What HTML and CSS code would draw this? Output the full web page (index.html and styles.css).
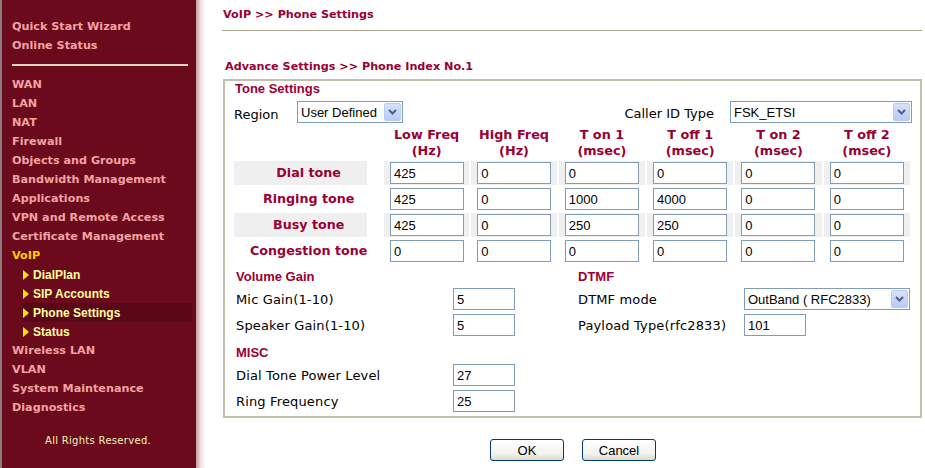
FILE: index.html
```html
<!DOCTYPE html>
<html>
<head>
<meta charset="utf-8">
<link rel="stylesheet" href="styles.css">
</head>
<body>
<div class="page">
  <nav class="sidebar">
    <div class="menu">
      <a class="nav">Quick Start Wizard</a>
      <a class="nav">Online Status</a>
      <div class="side-rule"></div>
      <a class="nav">WAN</a>
      <a class="nav">LAN</a>
      <a class="nav">NAT</a>
      <a class="nav">Firewall</a>
      <a class="nav">Objects and Groups</a>
      <a class="nav">Bandwidth Management</a>
      <a class="nav">Applications</a>
      <a class="nav">VPN and Remote Access</a>
      <a class="nav">Certificate Management</a>
      <a class="nav nav-open">VoIP</a>
      <a class="sub"><svg class="tri" width="6" height="10" viewBox="0 0 6 10"><path d="M0 0L6 5L0 10Z" fill="#f5e400"/></svg><span>DialPlan</span></a>
      <a class="sub"><svg class="tri" width="6" height="10" viewBox="0 0 6 10"><path d="M0 0L6 5L0 10Z" fill="#f5e400"/></svg><span>SIP Accounts</span></a>
      <a class="sub sub-active"><svg class="tri" width="6" height="10" viewBox="0 0 6 10"><path d="M0 0L6 5L0 10Z" fill="#f5e400"/></svg><span>Phone Settings</span></a>
      <a class="sub"><svg class="tri" width="6" height="10" viewBox="0 0 6 10"><path d="M0 0L6 5L0 10Z" fill="#f5e400"/></svg><span>Status</span></a>
      <a class="nav">Wireless LAN</a>
      <a class="nav">VLAN</a>
      <a class="nav">System Maintenance</a>
      <a class="nav">Diagnostics</a>
    </div>
    <div class="copy">All Rights Reserved.</div>
  </nav>
  <div class="fade"></div>
  <main class="main">
    <h1 class="title">VoIP &gt;&gt; Phone Settings</h1>
    <h2 class="subtitle">Advance Settings &gt;&gt; Phone Index No.1</h2>
    <div class="box">
      <div class="heading">Tone Settings</div>
      <div class="region-row">
        <span class="region-label">Region</span>
        <span class="sel sel-region"><select><option>User Defined</option></select><span class="sel-btn"><svg width="9" height="6" viewBox="0 0 9 6"><path d="M1 1L4.5 4.5L8 1" fill="none" stroke="#4d6185" stroke-width="2"/></svg></span></span>
        <span class="caller-label">Caller ID Type</span>
        <span class="sel sel-caller"><select><option>FSK_ETSI</option></select><span class="sel-btn"><svg width="9" height="6" viewBox="0 0 9 6"><path d="M1 1L4.5 4.5L8 1" fill="none" stroke="#4d6185" stroke-width="2"/></svg></span></span>
      </div>
      <table class="tones">
        <colgroup>
          <col class="c-label"><col class="c-gap"><col class="c86"><col class="c86"><col class="c87"><col class="c87"><col class="c87"><col class="c87">
        </colgroup>
        <tr class="head">
          <th></th><th></th>
          <th>Low Freq<br>(Hz)</th>
          <th>High Freq<br>(Hz)</th>
          <th>T on 1<br>(msec)</th>
          <th>T off 1<br>(msec)</th>
          <th>T on 2<br>(msec)</th>
          <th>T off 2<br>(msec)</th>
        </tr>
        <tr class="shade">
          <td class="lbl">Dial tone</td><td class="gap"></td>
          <td><input value="425"></td><td><input value="0"></td><td><input value="0"></td><td><input value="0"></td><td><input value="0"></td><td><input value="0"></td>
        </tr>
        <tr>
          <td class="lbl">Ringing tone</td><td class="gap"></td>
          <td><input value="425"></td><td><input value="0"></td><td><input value="1000"></td><td><input value="4000"></td><td><input value="0"></td><td><input value="0"></td>
        </tr>
        <tr class="shade">
          <td class="lbl">Busy tone</td><td class="gap"></td>
          <td><input value="425"></td><td><input value="0"></td><td><input value="250"></td><td><input value="250"></td><td><input value="0"></td><td><input value="0"></td>
        </tr>
        <tr>
          <td class="lbl">Congestion tone</td><td class="gap"></td>
          <td><input value="0"></td><td><input value="0"></td><td><input value="0"></td><td><input value="0"></td><td><input value="0"></td><td><input value="0"></td>
        </tr>
      </table>
      <div class="lower">
        <div class="col col-left">
          <div class="heading">Volume Gain</div>
          <div class="frow"><span class="flabel">Mic Gain(1-10)</span><input class="short" value="5"></div>
          <div class="frow"><span class="flabel">Speaker Gain(1-10)</span><input class="short" value="5"></div>
          <div class="heading heading-misc">MISC</div>
          <div class="frow"><span class="flabel">Dial Tone Power Level</span><input class="short" value="27"></div>
          <div class="frow"><span class="flabel">Ring Frequency</span><input class="short" value="25"></div>
        </div>
        <div class="col col-right">
          <div class="heading">DTMF</div>
          <div class="frow"><span class="flabel">DTMF mode</span><span class="sel sel-dtmf"><select><option>OutBand ( RFC2833)</option></select><span class="sel-btn"><svg width="9" height="6" viewBox="0 0 9 6"><path d="M1 1L4.5 4.5L8 1" fill="none" stroke="#4d6185" stroke-width="2"/></svg></span></span></div>
          <div class="frow"><span class="flabel">Payload Type(rfc2833)</span><input class="short" value="101"></div>
        </div>
      </div>
    </div>
    <div class="buttons">
      <button class="btn">OK</button>
      <button class="btn">Cancel</button>
    </div>
  </main>
</div>
</body>
</html>
```

FILE: styles.css
```css
* { box-sizing: border-box; }
html, body { margin: 0; padding: 0; background: #fff; }
body { font-family: "DejaVu Sans", Verdana, sans-serif; font-size: 13px; color: #000; }

.page { display: flex; height: 468px; overflow: hidden; }

.sidebar {
  width: 196px;
  flex: none;
  background: #6c0a1d;
  border-left: 2px solid #8a7c7e;
  display: flex;
  flex-direction: column;
}
.menu { display: flex; flex-direction: column; padding: 17px 0 0 10px; }
.nav {
  display: block;
  height: 19px;
  line-height: 19px;
  font-family: "DejaVu Sans", Verdana, sans-serif;
  font-weight: bold;
  font-size: 11.2px;
  color: #f2a2a2;
  white-space: nowrap;
}
.nav-open { color: #ffcc00; }
.side-rule { height: 2px; background: #dcd8c0; width: 176px; margin: 9px 0 9px; }
.sub {
  display: flex;
  align-items: center;
  height: 19px;
  margin: 0 4px 0 10px;
  padding-left: 1px;
  font-family: "Liberation Sans", Arial, sans-serif;
  font-weight: bold;
  font-size: 12px;
  color: #ffff99;
  white-space: nowrap;
}
.sub .tri { margin-right: 4px; flex: none; }
.sub-active { background: #5a0817; }
.copy {
  margin-top: 15px;
  text-align: center;
  line-height: 18px;
  font-size: 10px;
  letter-spacing: 0.3px;
  color: #f0f4b8;
  padding-right: 2px;
}

.fade {
  width: 10px;
  flex: none;
  background: linear-gradient(to right, #c89aa4, #f3e2e6 50%, #ffffff);
}

.main { width: 700px; margin-left: 16px; flex: none; }

.title {
  margin: 0;
  padding: 7px 0 7px 1px;
  line-height: 16px;
  font-size: 11.2px;
  font-weight: bold;
  color: #990033;
  border-bottom: 1px solid #a7a38d;
}
.subtitle {
  margin: 28px 0 4px 3px;
  line-height: 16px;
  font-size: 11.2px;
  font-weight: bold;
  color: #990033;
}

.box {
  margin-left: 1px;
  border: 2px solid #c3bfac;
  padding: 0 8px 4px 9px;
}
.heading {
  line-height: 16px;
  font-family: "Liberation Sans", Arial, sans-serif;
  font-weight: bold;
  font-size: 13px;
  color: #990033;
  padding-left: 1px;
}

.region-row { display: flex; align-items: center; margin-top: 4px; height: 22px; }
.region-label { width: 63px; padding-top: 4px; }
.caller-label { margin-left: auto; padding-right: 16px; padding-top: 3px; text-align: right; }

.sel { position: relative; display: inline-block; height: 22px; }
.sel select {
  appearance: none;
  -webkit-appearance: none;
  width: 100%;
  height: 100%;
  border: 1px solid #7f9db9;
  background: #fff;
  font-family: "Liberation Sans", Arial, sans-serif;
  font-size: 13px;
  color: #000;
  padding: 0 0 0 3px;
  margin: 0;
  border-radius: 0;
}
.sel-btn {
  position: absolute;
  right: 2px;
  top: 2px;
  width: 17px;
  height: 18px;
  border: 1px solid #b9cbf3;
  border-radius: 2px;
  background: linear-gradient(#d6e2fc, #b6cbf6);
  display: flex;
  align-items: center;
  justify-content: center;
}
.sel-region { width: 106px; }
.sel-caller { width: 182px; }
.sel-dtmf { width: 166px; }

.tones {
  border-collapse: separate;
  border-spacing: 2px;
  table-layout: fixed;
  margin-left: -2px;
  margin-top: 0;
}
.c-label { width: 130px; }
.c-gap { width: 14px; }
.c86 { width: 86px; }
.c87 { width: 87px; }
.tones th {
  height: 34px;
  vertical-align: bottom;
  line-height: 16px;
  font-size: 12.8px;
  font-weight: bold;
  color: #990033;
  padding: 0;
  text-align: center;
  white-space: nowrap;
}
.tones td { height: 24px; padding: 0 0 0 6px; vertical-align: middle; line-height: 16px; }
.tones td.lbl {
  padding: 0 0 0 16px;
  text-align: center;
  font-weight: bold;
  font-size: 12.7px;
  color: #990033;
  white-space: nowrap;
}
.tones td.gap { padding: 0; background: transparent !important; }
.tones tr.shade td { background: #efefef; }

input {
  height: 22px;
  border: 1px solid #7f9db9;
  font-family: "Liberation Sans", Arial, sans-serif;
  font-size: 13px;
  padding: 0 0 0 3px;
  margin: 0;
  color: #000;
  background: #fff;
}
.tones input { width: 74px; display: block; }

.lower { display: flex; margin-top: 4px; }
.col-left { width: 343px; padding-left: 1px; }
.col-right { flex: 1; }
.frow { display: flex; align-items: center; height: 22px; margin-top: 3px; }
.frow + .frow { margin-top: 4px; }
.flabel { letter-spacing: 0.15px; white-space: nowrap; line-height: 16px; }
.col-left .flabel { width: 218px; padding-left: 1px; padding-top: 1px; }
.col-right .flabel { width: 167px; padding-left: 1px; padding-top: 1px; }
.heading-misc { margin-top: 9px; }
input.short { width: 62px; }

.buttons { display: flex; justify-content: center; gap: 18px; margin-top: 21px; padding-left: 2px; }
.btn {
  width: 74px;
  height: 22px;
  border: 1px solid #003c74;
  border-radius: 3px;
  background: linear-gradient(#ffffff, #f2f1ec 70%, #dcd8cd);
  font-family: "Liberation Sans", Arial, sans-serif;
  font-size: 13px;
  color: #000;
  padding: 0;
}
```
